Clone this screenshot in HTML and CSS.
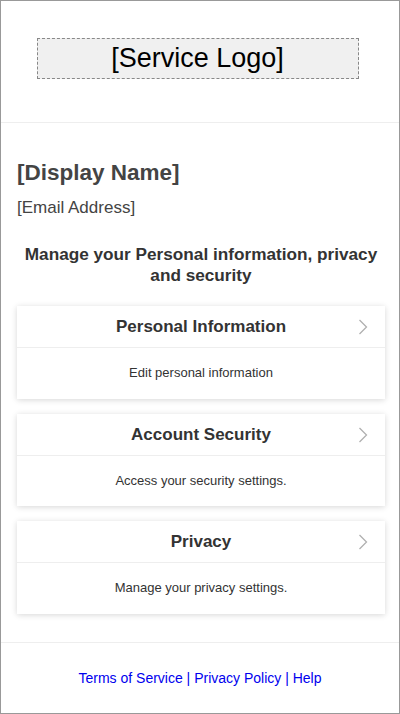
FILE: index.html
```html
<!DOCTYPE html>
<html>
<head>
<meta charset="utf-8">
<link rel="stylesheet" href="styles.css">
</head>
<body>
<div class="frame">
  <header class="header">
    <div class="logo">[Service Logo]</div>
  </header>
  <main class="content">
    <h1 class="name">[Display Name]</h1>
    <div class="email">[Email Address]</div>
    <h2 class="intro">Manage your Personal information, privacy and security</h2>
    <div class="cards">
      <a class="card" href="#">
        <div class="card-head">Personal Information
          <svg class="chev" width="10" height="16" viewBox="0 0 10 16"><path d="M1.5 1 L8.5 8 L1.5 15" fill="none" stroke="#b0b0b0" stroke-width="1.3"/></svg>
        </div>
        <div class="card-body">Edit personal information</div>
      </a>
      <a class="card" href="#">
        <div class="card-head">Account Security
          <svg class="chev" width="10" height="16" viewBox="0 0 10 16"><path d="M1.5 1 L8.5 8 L1.5 15" fill="none" stroke="#b0b0b0" stroke-width="1.3"/></svg>
        </div>
        <div class="card-body">Access your security settings.</div>
      </a>
      <a class="card" href="#">
        <div class="card-head">Privacy
          <svg class="chev" width="10" height="16" viewBox="0 0 10 16"><path d="M1.5 1 L8.5 8 L1.5 15" fill="none" stroke="#b0b0b0" stroke-width="1.3"/></svg>
        </div>
        <div class="card-body">Manage your privacy settings.</div>
      </a>
    </div>
  </main>
  <footer class="footer">
    <a href="#">Terms of Service</a> | <a href="#">Privacy Policy</a> | <a href="#">Help</a>
  </footer>
</div>
</body>
</html>
```
FILE: styles.css
```css
* { box-sizing: border-box; }
html, body { margin: 0; padding: 0; }
body {
  font-family: "Liberation Sans", Arial, sans-serif;
  background: #fff;
}
.frame {
  width: 400px;
  height: 714px;
  border: 1px solid #999;
  display: flex;
  flex-direction: column;
}
.header {
  display: flex;
  justify-content: center;
  padding: 37px 5px 43px 0;
  border-bottom: 1px solid #eee;
}
.logo {
  width: 322px;
  height: 41px;
  background: #f0f0f0;
  border: 1px dashed #888;
  font-size: 27px;
  line-height: 38px;
  text-align: center;
  color: #000;
}
.content {
  flex: 1;
  padding: 0 14px 0 16px;
}
.name {
  margin: 36px 0 0;
  font-size: 22.5px;
  line-height: 28px;
  font-weight: bold;
  color: #444;
}
.email {
  margin-top: 11px;
  font-size: 17px;
  line-height: 20px;
  color: #444;
}
.intro {
  margin: 26px 0 0;
  font-size: 17.2px;
  line-height: 21px;
  font-weight: bold;
  color: #333;
  text-align: center;
}
.cards {
  margin-top: 20px;
  display: flex;
  flex-direction: column;
  gap: 15px;
}
.card {
  display: block;
  background: #fff;
  box-shadow: 0 1px 6px rgba(0,0,0,0.16);
  text-decoration: none;
  color: #333;
}
.card-head {
  position: relative;
  height: 42px;
  border-bottom: 1px solid #eee;
  font-size: 17px;
  font-weight: bold;
  line-height: 41px;
  text-align: center;
  color: #333;
}
.chev {
  position: absolute;
  right: 17px;
  top: 13px;
}
.card-body {
  height: 50.5px;
  font-size: 13px;
  line-height: 50px;
  text-align: center;
  color: #333;
}
.footer {
  border-top: 1px solid #eee;
  height: 71px;
  padding-top: 27px;
  text-align: center;
  font-size: 14px;
  line-height: 17px;
  color: #00e;
}
.footer a {
  color: #00e;
  text-decoration: none;
}
```
